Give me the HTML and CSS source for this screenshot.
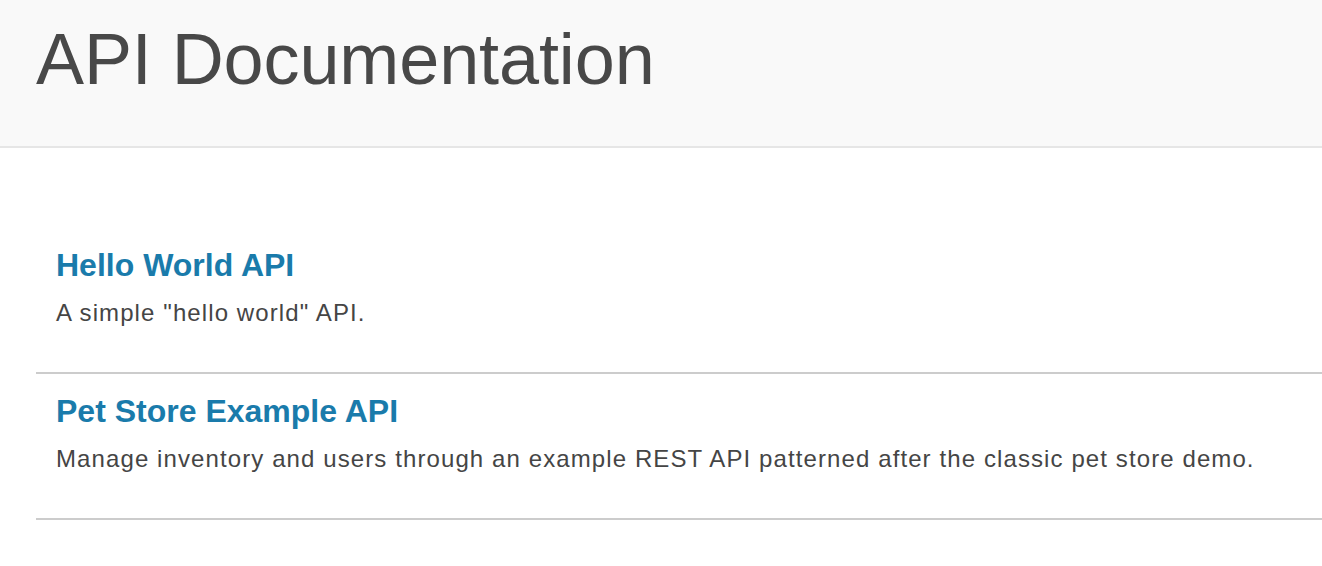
FILE: index.html
```html
<!DOCTYPE html>
<html lang="en">
<head>
<meta charset="utf-8">
<title>API Documentation</title>
<link rel="stylesheet" href="styles.css">
</head>
<body>
<header class="site-header">
  <h1 class="site-title">API Documentation</h1>
</header>
<main class="api-list">
  <section class="api-item">
    <h2 class="api-name"><a href="#">Hello World API</a></h2>
    <p class="api-desc">A simple "hello world" API.</p>
  </section>
  <section class="api-item">
    <h2 class="api-name"><a href="#">Pet Store Example API</a></h2>
    <p class="api-desc">Manage inventory and users through an example REST API patterned after the classic pet store demo.</p>
  </section>
</main>
</body>
</html>
```
FILE: styles.css
```css
html, body {
  margin: 0;
  padding: 0;
  background: #ffffff;
  font-family: "Liberation Sans", Arial, Helvetica, sans-serif;
  color: #454545;
}

.site-header {
  background: #f9f9f9;
  border-bottom: 2px solid #e6e6e6;
  height: 146px;
  box-sizing: content-box;
  padding: 0 36px;
}

.site-title {
  margin: 0;
  padding-top: 19px;
  font-size: 72px;
  line-height: 80px;
  font-weight: normal;
  color: #484848;
  letter-spacing: -0.1px;
}

.api-list {
  margin: 80px 0 0 36px;
}

.api-item {
  padding: 19px 20px 44px;
  border-bottom: 2px solid #cccccc;
}

.api-name {
  margin: 0;
  font-size: 32px;
  line-height: 36px;
  font-weight: bold;
}

.api-name a {
  color: #1a7bab;
  text-decoration: none;
}

.api-desc {
  margin: 15px 0 0;
  font-size: 24px;
  line-height: 30px;
  letter-spacing: 1.1px;
  color: #454545;
}
```
